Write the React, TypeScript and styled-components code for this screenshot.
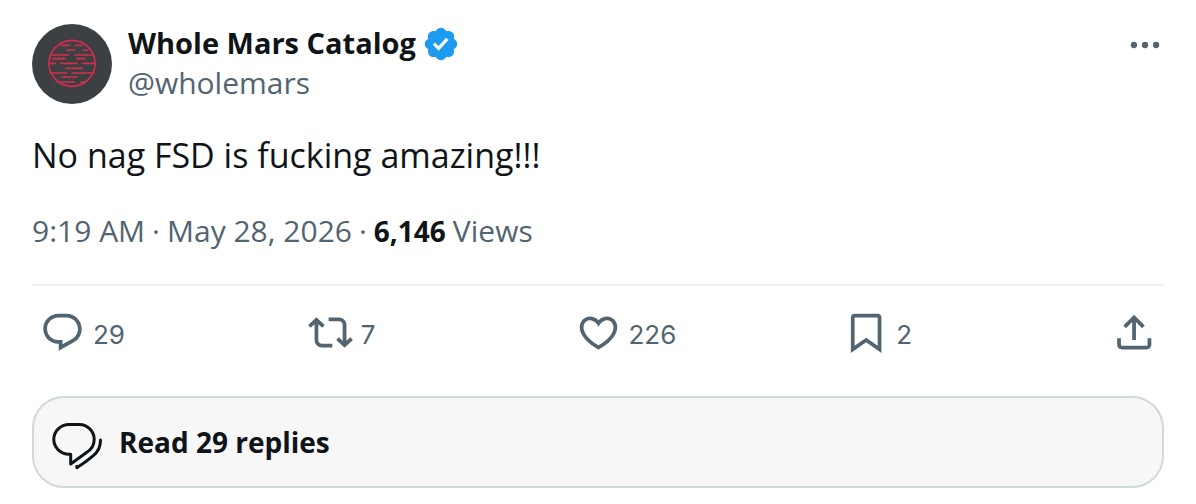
import React from "react";
import styled, { createGlobalStyle } from "styled-components";

const GlobalStyle = createGlobalStyle`
  *, *::before, *::after { box-sizing: border-box; }
  body {
    margin: 0;
    background: #fff;
    color: #0f1419;
    font-family: "Open Sans", "Liberation Sans", sans-serif;
  }
`;

const Post = styled.article`
  padding: 24px 32px 16px;
`;

const Header = styled.header`
  display: flex;
  align-items: flex-start;
  gap: 16px;
`;

const Avatar = styled.svg`
  flex: none;
  width: 80px;
  height: 80px;
  border-radius: 50%;
  background: #3c4043;
`;

const Author = styled.div`
  flex: 1;
  min-width: 0;
`;

const NameRow = styled.div`
  display: flex;
  align-items: center;
  gap: 6px;
  height: 40px;
`;

const Link = styled.a`
  color: inherit;
  text-decoration: none;
`;

const Name = styled(Link)`
  padding-bottom: 2px;
  font-size: 29px;
  font-weight: 700;
  line-height: 38px;
  white-space: nowrap;
`;

const Handle = styled(Link)`
  display: block;
  width: max-content;
  color: #536471;
  font-size: 30px;
  line-height: 38px;
`;

const Icon = styled.svg<{ $size: number }>`
  flex: none;
  display: block;
  width: ${(p) => p.$size}px;
  height: ${(p) => p.$size}px;
  fill: currentColor;
`;

const Verified = styled(Icon)`
  color: #1d9bf0;
`;

const PlainButton = styled.button`
  display: flex;
  align-items: center;
  padding: 0;
  border: 0;
  background: none;
  color: #536471;
  font: inherit;
  cursor: pointer;
`;

const MoreButton = styled(PlainButton)`
  height: 42px;
`;

const Body = styled.p`
  margin: 27px 0 0;
  font-size: 34px;
  line-height: 48px;
`;

const Meta = styled.div`
  display: flex;
  flex-wrap: wrap;
  align-items: baseline;
  column-gap: 7px;
  margin-top: 32px;
  color: #536471;
  font-size: 30px;
  line-height: 40px;
`;

const Views = styled.strong`
  color: #0f1419;
  font-size: 28px;
  font-weight: 700;
`;

const Actions = styled.div`
  display: grid;
  grid-template-columns: repeat(4, 1fr) auto;
  margin-top: 33px;
  padding: 24px 8px 41px;
  border-top: 2px solid #eff3f4;
`;

const Action = styled(PlainButton)`
  justify-self: start;
  gap: 8px;
`;

const Count = styled.span`
  padding-top: 4px;
  font-family: Inter, "Liberation Sans", sans-serif;
  font-size: 26px;
  line-height: 32px;
`;

const Replies = styled.button`
  display: flex;
  align-items: center;
  gap: 16px;
  width: 100%;
  height: 92px;
  padding: 0 17px;
  border: 2px solid #cfd9de;
  border-radius: 32px;
  background: #f7f7f7;
  color: #0f1419;
  font-family: inherit;
  font-size: 28px;
  font-weight: 700;
  cursor: pointer;
`;

const RepliesIcon = styled.svg`
  flex: none;
  width: 52px;
  height: 52px;
  fill: none;
  stroke: currentColor;
  stroke-width: 3;
  stroke-linecap: round;
  stroke-linejoin: round;
`;

const paths = {
  verified:
    "M22.25 12c0-1.43-.88-2.67-2.19-3.34.46-1.39.2-2.9-.81-3.91s-2.52-1.27-3.91-.81c-.66-1.31-1.91-2.19-3.34-2.19s-2.67.88-3.33 2.19c-1.4-.46-2.91-.2-3.92.81s-1.26 2.52-.8 3.91c-1.31.67-2.2 1.91-2.2 3.34s.89 2.67 2.2 3.34c-.46 1.39-.21 2.9.8 3.91s2.52 1.26 3.91.81c.67 1.31 1.91 2.19 3.34 2.19s2.68-.88 3.34-2.19c1.39.45 2.9.2 3.91-.81s1.27-2.52.81-3.91c1.31-.67 2.19-1.91 2.19-3.34zm-11.71 4.2L6.8 12.46l1.41-1.42 2.26 2.26 4.8-5.23 1.47 1.36-6.2 6.77z",
  more: "M3 12a2 2 0 1 1 4 0 2 2 0 0 1-4 0zm7 0a2 2 0 1 1 4 0 2 2 0 0 1-4 0zm7 0a2 2 0 1 1 4 0 2 2 0 0 1-4 0z",
  reply:
    "M1.751 10c0-4.42 3.584-8 8.005-8h4.366c4.49 0 8.129 3.64 8.129 8.13 0 2.96-1.607 5.68-4.196 7.11l-8.054 4.46v-3.69h-.067c-4.49.1-8.183-3.51-8.183-8.01zm8.005-6c-3.317 0-6.005 2.69-6.005 6 0 3.37 2.77 6.08 6.138 6.01l.351-.01h1.761v2.3l5.087-2.81c1.951-1.08 3.163-3.13 3.163-5.36 0-3.39-2.744-6.13-6.129-6.13H9.756z",
  repost:
    "M4.5 3.88l4.432 4.14-1.364 1.46L5.5 7.55V16c0 1.1.896 2 2 2H13v2H7.5c-2.209 0-4-1.79-4-4V7.55L1.432 9.48.068 8.02 4.5 3.88zM16.5 6H11V4h5.5c2.209 0 4 1.79 4 4v8.45l2.068-1.93 1.364 1.46-4.432 4.14-4.432-4.14 1.364-1.46 2.068 1.93V8c0-1.1-.896-2-2-2z",
  like: "M16.697 5.5c-1.222-.06-2.679.51-3.89 2.16l-.805 1.09-.806-1.09C9.984 6.01 8.526 5.44 7.304 5.5c-1.243.07-2.349.78-2.91 1.91-.552 1.12-.633 2.78.479 4.82 1.074 1.97 3.257 4.27 7.129 6.61 3.87-2.34 6.052-4.64 7.126-6.61 1.111-2.04 1.03-3.7.477-4.82-.561-1.13-1.666-1.84-2.908-1.91zm4.187 7.69c-1.351 2.48-4.001 5.12-8.379 7.67l-.503.3-.504-.3c-4.379-2.55-7.029-5.19-8.382-7.67-1.36-2.5-1.41-4.86-.514-6.67.887-1.79 2.647-2.91 4.601-3.01 1.651-.09 3.368.56 4.798 2.01 1.429-1.45 3.146-2.1 4.796-2.01 1.954.1 3.714 1.22 4.601 3.01.896 1.81.846 4.17-.514 6.67z",
  bookmark:
    "M4.2 4c0-1.1.9-2 2-2h12.3c1.1 0 2 .9 2 2v18.94l-8.15-5.71-8.15 5.71V4zm2 0v15.06l6.15-4.29 6.15 4.29V4H6.2z",
  share:
    "M12.3 2.59l5.7 5.7-1.41 1.42-3.29-3.3V16h-2V6.41l-3.3 3.3-1.41-1.42 5.71-5.7zM21.5 15v3.5c0 1.38-1.12 2.5-2.5 2.5H5.8c-1.38 0-2.5-1.12-2.5-2.5V15h2v3.5c0 .28.22.5.5.5H19c.28 0 .5-.22.5-.5V15h2z",
};

const actions: { label: string; path: string; count?: string }[] = [
  { label: "Reply", path: paths.reply, count: "29" },
  { label: "Repost", path: paths.repost, count: "7" },
  { label: "Like", path: paths.like, count: "226" },
  { label: "Bookmark", path: paths.bookmark, count: "2" },
  { label: "Share", path: paths.share },
];

export default function App() {
  return (
    <>
      <GlobalStyle />
      <Post>
        <Header>
          <Avatar viewBox="36 30 240 240" aria-hidden="true">
            <g fill="none" stroke="#d42e4c" strokeWidth="5" strokeLinecap="round">
              <circle cx="156" cy="148" r="69" />
              <path d="M124 94h25M166 94h20M141 108h23M189 108h14M91 123h54M164 123h55M97 134h38M171 134h24M88 148h18M122 148h49M188 148h36M138 163h49M90 177h51M157 177h65M125 189h46M112 204h52M183 204h14" />
            </g>
            <g fill="#8a3a48">
              <circle cx="95" cy="88" r="2" />
              <circle cx="118" cy="80" r="2" />
              <circle cx="213" cy="88" r="2" />
              <circle cx="91" cy="194" r="2" />
              <circle cx="102" cy="211" r="2" />
            </g>
          </Avatar>
          <Author>
            <NameRow>
              <Name href="#profile">Whole Mars Catalog</Name>
              <Verified $size={38} viewBox="0 0 24 24" role="img" aria-label="Verified account">
                <path d={paths.verified} />
              </Verified>
            </NameRow>
            <Handle href="#profile">@wholemars</Handle>
          </Author>
          <MoreButton aria-label="More">
            <Icon $size={38} viewBox="0 0 24 24">
              <path d={paths.more} />
            </Icon>
          </MoreButton>
        </Header>
        <Body>No nag FSD is fucking amazing!!!</Body>
        <Meta>
          <time dateTime="09:19">9:19 AM</time>
          <span>·</span>
          <time dateTime="2026-05-28">May 28, 2026</time>
          <span>·</span>
          <Views>6,146</Views>
          <span>Views</span>
        </Meta>
        <Actions>
          {actions.map((a) => (
            <Action key={a.label} aria-label={a.label}>
              <Icon $size={45} viewBox="0 0 24 24">
                <path d={a.path} />
              </Icon>
              {a.count && <Count>{a.count}</Count>}
            </Action>
          ))}
        </Actions>
        <Replies>
          <RepliesIcon viewBox="1 -4 52 52" aria-hidden="true" overflow="visible">
            <path d="M19 4.5h10.3c8.2 0 14.9 6.6 14.9 14.8 0 5.5-2.9 10.4-7.7 13.2L20.7 44v-9.8H19c-8.4 0-15.2-6.7-15.2-14.9S10.6 4.5 19 4.5z" />
            <path d="M50.5 20c.1 6.500-2.500 11.900-7.500 15.900-4.800 4.200-10.400 8.200-16.200 11.800v-1.500" />
          </RepliesIcon>
          Read 29 replies
        </Replies>
      </Post>
    </>
  );
}
